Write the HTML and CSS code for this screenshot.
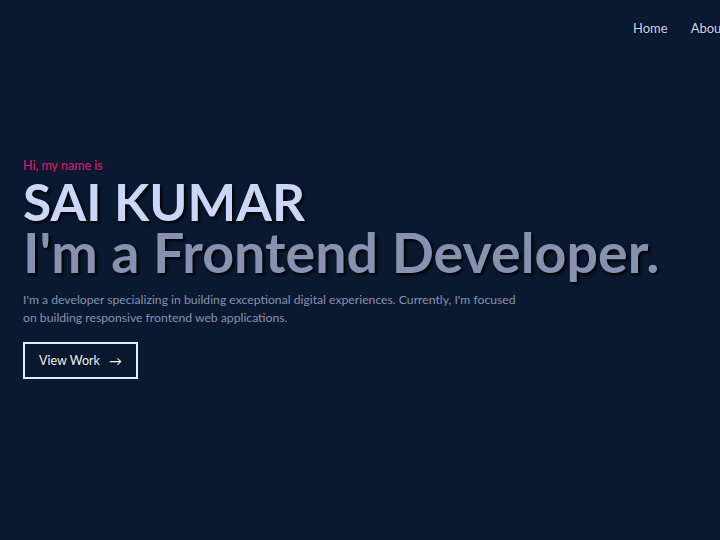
FILE: index.html
```html
<!DOCTYPE html>
<html>
<head>
<meta charset="utf-8">
<link rel="stylesheet" href="styles.css">
</head>
<body>
<div class="page">
  <header class="nav">
    <ul class="nav-list">
      <li>Home</li>
      <li>About</li>
    </ul>
  </header>
  <main class="hero">
    <p class="intro">Hi, my name is</p>
    <h1 class="name">SAI KUMAR</h1>
    <h2 class="role">I'm a Frontend Developer.</h2>
    <p class="desc">I'm a developer specializing in building exceptional digital experiences. Currently, I'm focused<br>on building responsive frontend web applications.</p>
    <button class="btn">View Work <span class="arrow">&#8594;</span></button>
  </main>
</div>
</body>
</html>
```
FILE: styles.css
```css
html, body {
  margin: 0;
  padding: 0;
  background: #0a192f;
  overflow: hidden;
}
.page {
  width: 720px;
  height: 540px;
  overflow: hidden;
  font-family: Lato, "Liberation Sans", sans-serif;
  color: #ccd6f6;
}
.nav {
  display: flex;
  height: 56px;
  align-items: center;
}
.nav-list {
  list-style: none;
  margin: 0;
  padding: 0 0 0 633px;
  display: flex;
  gap: 23px;
  white-space: nowrap;
  font-size: 13px;
  text-shadow: 0 0 3px #000;
}
.hero {
  padding: 101px 0 0 23px;
}
.intro {
  margin: 0;
  color: #e31b6d;
  font-size: 12.5px;
  line-height: 18px;
}
.name {
  margin: 0;
  font-size: 51.5px;
  line-height: 52px;
  font-weight: 700;
  color: #ccd6f6;
  text-shadow: 2px 2px 3px #000;
}
.role {
  margin: 0;
  font-size: 55.6px;
  line-height: 50px;
  font-weight: 700;
  white-space: nowrap;
  color: #8892b0;
  text-shadow: 2px 2px 3px #000;
}
.desc {
  margin: 14px 0 0;
  white-space: nowrap;
  font-size: 12.2px;
  line-height: 18px;
  color: #8892b0;
}
.btn {
  margin-top: 15px;
  width: 115px;
  height: 37px;
  background: transparent;
  border: 2px solid #e6ebf7;
  color: #f2f4fa;
  font-family: inherit;
  font-size: 12.5px;
  display: flex;
  align-items: center;
  justify-content: center;
  gap: 9px;
  padding: 0;
  text-shadow: 0 0 2px #000;
}
.arrow {
  font-size: 13px;
}
```
